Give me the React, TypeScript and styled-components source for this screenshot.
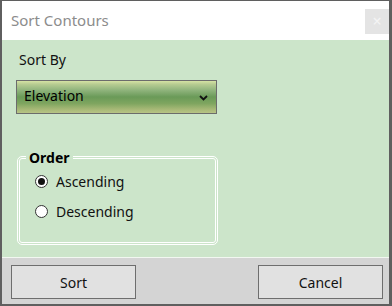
import React, { useState } from 'react'
import styled, { createGlobalStyle } from 'styled-components'

const GlobalStyle = createGlobalStyle`
  html, body {
    margin: 0;
    padding: 0;
    background: #5f5f5f;
    font-family: "Segoe UI", "Noto Sans", "Open Sans", sans-serif;
  }
  #root {
    height: 306px;
    overflow: hidden;
  }
`

const Window = styled.div`
  margin: 1px 3px 0 2px;
  height: 303px;
  display: flex;
  flex-direction: column;
  background: #d4d4d4;
`

const TitleBar = styled.div`
  height: 39px;
  flex-shrink: 0;
  background: #ffffff;
  display: flex;
  align-items: center;
  justify-content: space-between;
  padding: 0 0 0 9px;
`

const Title = styled.span`
  font-size: 15px;
  color: #8c8c8c;
  margin-top: -1px;
`

const CloseButton = styled.div`
  width: 24px;
  height: 25px;
  margin-top: 1px;
  background: #e4e4e4;
  color: #f4f4f4;
  display: flex;
  align-items: center;
  justify-content: center;
  font-size: 16px;
`

const Content = styled.div`
  height: 218px;
  flex-shrink: 0;
  background: #cce5ca;
  border-bottom: 1px solid #f2f7f1;
  padding: 10px 0 0 14px;
  box-sizing: border-box;
`

const Label = styled.div`
  font-size: 14px;
  color: #111;
  margin-left: 3px;
  line-height: 20px;
`

const Select = styled.div`
  margin-top: 10px;
  width: 201px;
  height: 34px;
  box-sizing: border-box;
  border: 1px solid #6c6c6c;
  background: linear-gradient(
    to bottom,
    #d6e3a4 0%,
    #b7cc92 10%,
    #8db27a 30%,
    #6a9a58 50%,
    #7ea55f 70%,
    #a6b876 88%,
    #b8c486 100%
  );
  display: flex;
  align-items: center;
  justify-content: space-between;
  padding: 0 8px 3px 7px;
  font-size: 14px;
  color: #000;
`

const Chevron = styled.svg`
  width: 9px;
  height: 6px;
  margin-top: 4px;
`

const Group = styled.fieldset`
  margin: 34px 0 0 1px;
  width: 201px;
  height: 97px;
  box-sizing: border-box;
  border: 3px double #ffffff;
  border-radius: 5px;
  padding: 0 0 0 15px;
`

const Legend = styled.legend`
  font-weight: bold;
  font-size: 14px;
  color: #000;
  padding: 0 3px;
  margin-left: -9px;
`

const RadioRow = styled.label`
  display: flex;
  align-items: center;
  gap: 8px;
  height: 30px;
  font-size: 14px;
  color: #111;
  &:first-of-type {
    margin-top: -1px;
  }
`

const RadioCircle = styled.span<{ checked: boolean }>`
  width: 13px;
  height: 13px;
  box-sizing: border-box;
  border-radius: 50%;
  border: 1px solid #333;
  background: #fff;
  display: flex;
  align-items: center;
  justify-content: center;
  &::after {
    content: '';
    width: 7px;
    height: 7px;
    border-radius: 50%;
    background: ${({ checked }) => (checked ? '#111' : 'transparent')};
  }
`

const Footer = styled.div`
  flex: 1;
  display: flex;
  justify-content: space-between;
  padding: 7px 6px 0 9px;
`

const Button = styled.button`
  width: 125px;
  height: 34px;
  box-sizing: border-box;
  border: 1px solid #6e6e6e;
  background: #e1e1e1;
  font-family: inherit;
  font-size: 14px;
  color: #111;
  padding: 0;
`

const orders = ['Ascending', 'Descending']

export default function App() {
  const [order, setOrder] = useState('Ascending')

  return (
    <>
      <GlobalStyle />
      <Window>
        <TitleBar>
          <Title>Sort Contours</Title>
          <CloseButton>×</CloseButton>
        </TitleBar>
        <Content>
          <Label>Sort By</Label>
          <Select>
            <span>Elevation</span>
            <Chevron viewBox="0 0 9 6">
              <path d="M1 1 L4.5 4.5 L8 1" fill="none" stroke="#111" strokeWidth="1.8" />
            </Chevron>
          </Select>
          <Group>
            <Legend>Order</Legend>
            {orders.map(o => (
              <RadioRow key={o} onClick={() => setOrder(o)}>
                <RadioCircle checked={order === o} />
                {o}
              </RadioRow>
            ))}
          </Group>
        </Content>
        <Footer>
          <Button>Sort</Button>
          <Button>Cancel</Button>
        </Footer>
      </Window>
    </>
  )
}
